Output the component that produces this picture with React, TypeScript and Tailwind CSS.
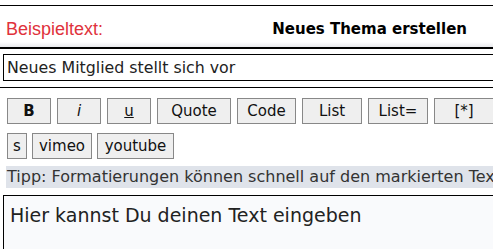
import React from 'react';

const row1 = [
  { label: 'B', w: 'w-[44px]', cls: 'font-bold' },
  { label: 'i', w: 'w-[44px]', cls: 'italic' },
  { label: 'u', w: 'w-[44px]', cls: 'underline' },
  { label: 'Quote', w: 'w-[74px]', cls: '' },
  { label: 'Code', w: 'w-[59px]', cls: '' },
  { label: 'List', w: 'w-[60px]', cls: '' },
  { label: 'List=', w: 'w-[60px]', cls: '' },
  { label: '[*]', w: 'w-[60px]', cls: '' },
];

const row2 = [
  { label: 's', w: 'w-[20px]' },
  { label: 'vimeo', w: 'w-[60px]' },
  { label: 'youtube', w: 'w-[77px]' },
];

export default function App() {
  return (
    <div className="w-[493px] h-[249px] overflow-hidden bg-white font-['DejaVu_Sans',sans-serif] text-[#222]">
      <div className="mt-[5px] border-t border-black">
        <div className="h-[36px] flex items-center justify-between pt-[10px] pl-[6px] pr-[26px] bg-white">
          <span className="font-['Liberation_Sans',sans-serif] text-[18px] text-[#e0323c]">Beispieltext:</span>
          <span className="text-[15px] font-bold text-black">Neues Thema erstellen</span>
        </div>
        <div className="h-[5px] bg-gradient-to-b from-white to-[#e8e9ed]" />
        <div className="border-t-2 border-black" />
      </div>

      <div className="mt-[5px] ml-[3px] w-[500px] h-[27px] border border-black flex items-center pl-[3px]">
        <span className="text-[15.8px] text-[#222]">Neues Mitglied stellt sich vor</span>
      </div>

      <div className="mt-[6px] border-t border-black" />

      <div className="mt-[10px] ml-[7px] flex gap-[6px] w-[600px]">
        {row1.map((b) => (
          <div
            key={b.label}
            className={`${b.w} h-[26px] shrink-0 flex items-center justify-center bg-[#efefef] border border-[#888] text-[15px] text-[#111]`}
          >
            <span className={b.cls}>{b.label}</span>
          </div>
        ))}
      </div>

      <div className="mt-[9px] ml-[7px] flex gap-[5px]">
        {row2.map((b) => (
          <div
            key={b.label}
            className={`${b.w} h-[26px] shrink-0 flex items-center justify-center bg-[#efefef] border border-[#888] text-[15px] text-[#111]`}
          >
            {b.label}
          </div>
        ))}
      </div>

      <div className="mt-[7px] ml-[6px] h-[22px] bg-[#dfe3ea] flex items-center pl-[1px] whitespace-nowrap overflow-hidden">
        <span className="text-[16px] text-[#333]">
          Tipp: Formatierungen können schnell auf den markierten Text
        </span>
      </div>

      <div className="mt-[7px] ml-[3px] w-[500px] h-[80px] border border-black bg-[#f9fafc] pl-[6px] pt-[5px]">
        <span className="text-[19px] text-[#222]">Hier kannst Du deinen Text eingeben</span>
      </div>
    </div>
  );
}
